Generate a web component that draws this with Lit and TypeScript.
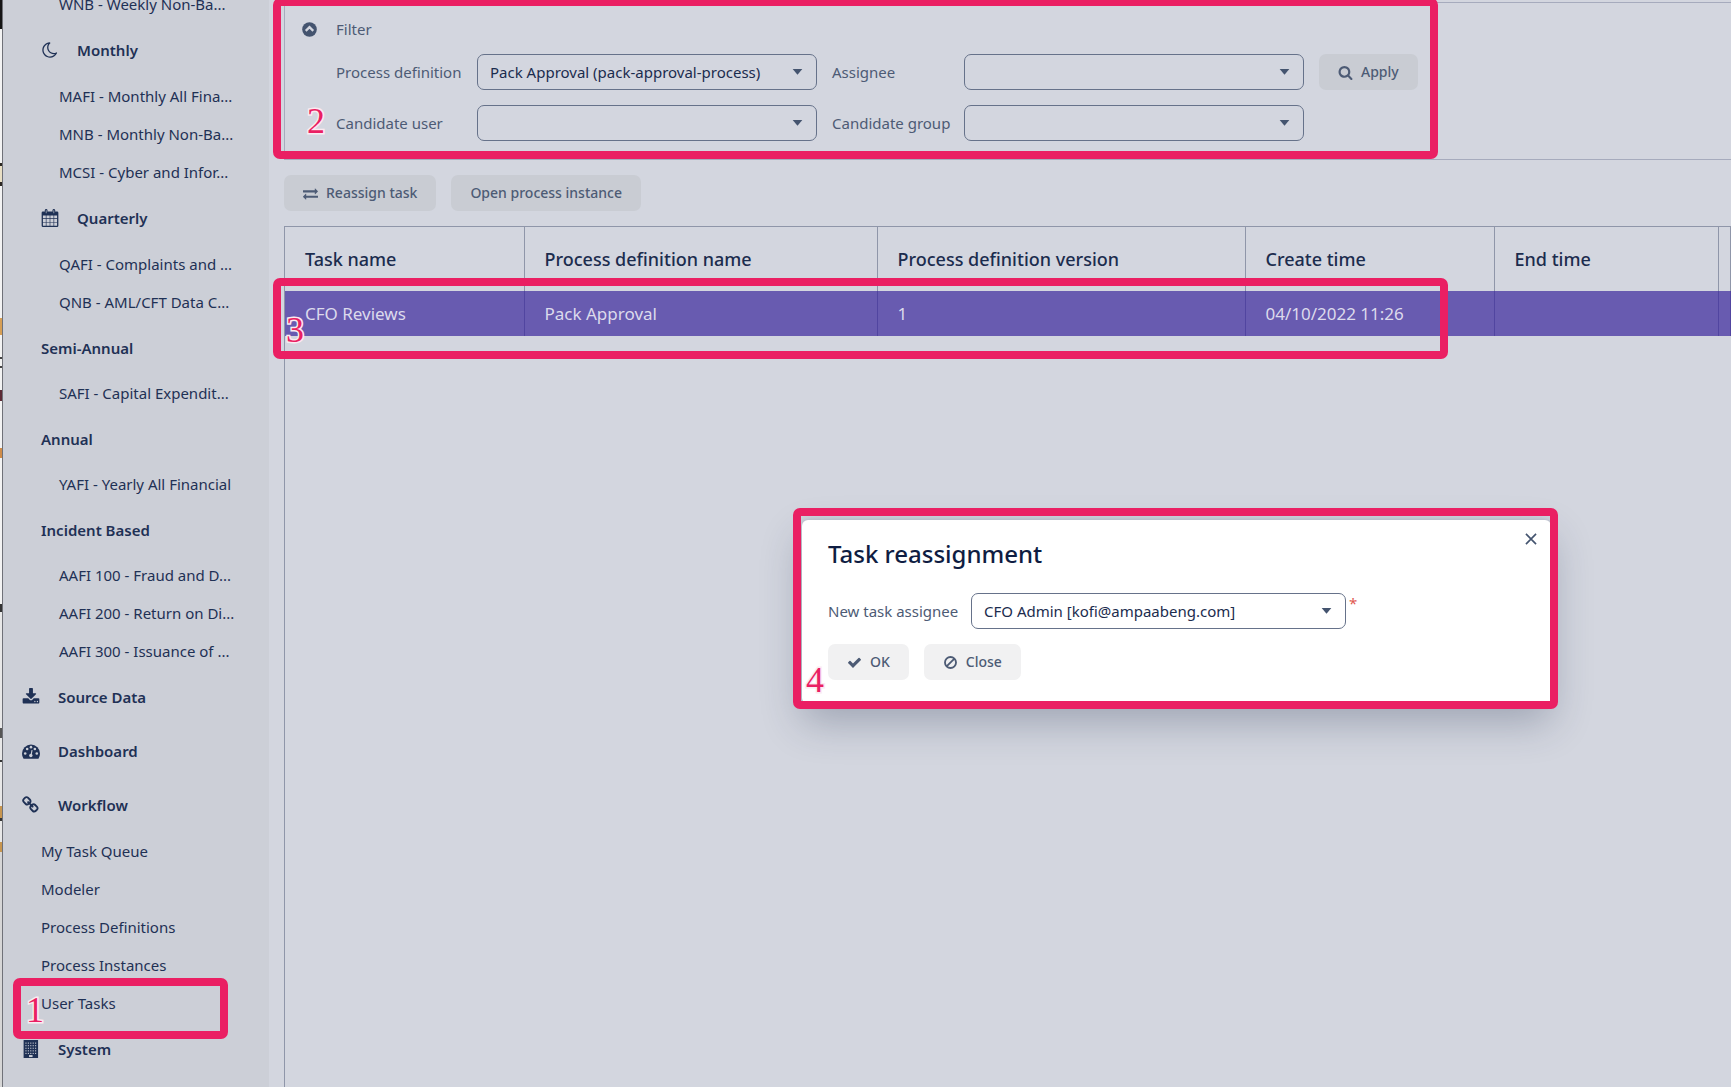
import { LitElement, html, css, svg, nothing } from "lit";
import { customElement, property } from "lit/decorators.js";

const ICONS: Record<string, unknown> = {
  moon: svg`<path d="M1390 1303q-54 9-110 9-182 0-337-90t-245-245-90-337q0-192 104-357-201 60-328.5 229t-127.5 384q0 130 51 248.5t136.5 204 204 136.5 248.5 51q144 0 273.5-61.5t220.5-171.5zm203-85q-94 203-283.5 324.5t-413.5 121.5q-156 0-298-61t-245-164-164-245-61-298q0-153 57.5-292.5t156-241.5 235.5-164.5 290-68.5q44-2 61 39 18 41-15 72-86 78-131.5 181.5t-45.5 218.5q0 148 73 273t198 198 273 73q118 0 228-51 41-18 72 13 14 14 17.5 34t-4.5 38z"/>`,
  calendar: svg`<path fill-rule="evenodd" d="M190 256H1602Q1728 256 1728 384V1664Q1728 1792 1602 1792H190Q64 1792 64 1664V384Q64 256 190 256ZM192 640V928H480V640ZM544 640V928H864V640ZM928 640V928H1248V640ZM1312 640V928H1600V640ZM192 992V1312H480V992ZM544 992V1312H864V992ZM928 992V1312H1248V992ZM1312 992V1312H1600V992ZM192 1376V1664H480V1376ZM544 1376V1664H864V1376ZM928 1376V1664H1248V1376ZM1312 1376V1664H1600V1376Z"/><rect x="384" y="0" width="256" height="512" rx="120"/><rect x="1152" y="0" width="256" height="512" rx="120"/><path class="cut" d="M480 128h64v288h-64zM1248 128h64v288h-64z"/>`,
  download: svg`<path d="M1344 1344q0-26-19-45t-45-19-45 19-19 45 19 45 45 19 45-19 19-45zm256 0q0-26-19-45t-45-19-45 19-19 45 19 45 45 19 45-19 19-45zm128-224v320q0 40-28 68t-68 28h-1472q-40 0-68-28t-28-68v-320q0-40 28-68t68-28h465l135 136q58 56 136 56t136-56l136-136h464q40 0 68 28t28 68zm-325-569q17 41-14 70l-448 448q-18 19-45 19t-45-19l-448-448q-31-29-14-70 17-39 59-39h256v-448q0-26 19-45t45-19h256q26 0 45 19t19 45v448h256q42 0 59 39z"/>`,
  gauge: svg`<path d="M0 1152A896 896 0 0 1 1792 1152Q1792 1413 1651 1635Q1632 1664 1597 1664H195Q160 1664 141 1635Q0 1413 0 1152Z"/><g class="cut"><circle cx="320" cy="1152" r="128"/><circle cx="512" cy="704" r="128"/><circle cx="896" cy="512" r="128"/><circle cx="1280" cy="704" r="128"/><circle cx="1472" cy="1152" r="128"/><circle cx="880" cy="1344" r="170"/><path d="M850 1300L950 800Q1010 760 1050 820L960 1320Z"/></g>`,
  link: svg`<path d="M1456 1216q0-40-28-68l-208-208q-28-28-68-28-42 0-72 32 3 3 19 18.5t21.5 21.5 15 19 13 25.5 3.5 27.5q0 40-28 68t-68 28q-15 0-27.5-3.5t-25.5-13-19-15-21.5-21.5-18.5-19q-33 31-33 73 0 40 28 68l206 207q27 27 68 27 40 0 68-26l147-146q28-28 28-67zm-703-705q0-40-28-68l-206-207q-28-28-68-28-39 0-68 27l-147 146q-28 28-28 67 0 40 28 68l208 208q27 27 68 27 42 0 72-31-3-3-19-18.5t-21.5-21.5-15-19-13-25.5-3.5-27.5q0-40 28-68t68-28q15 0 27.5 3.5t25.5 13 19 15 21.5 21.5 18.5 19q33-31 33-73zm895 705q0 120-85 203l-147 146q-83 83-203 83-121 0-204-85l-206-207q-83-83-83-203 0-123 88-209l-88-88q-86 88-208 88-120 0-204-84l-208-208q-84-84-84-204t85-203l147-146q83-83 203-83 121 0 204 85l206 207q83 83 83 203 0 123-88 209l88 88q86-88 208-88 120 0 204 84l208 208q84 84 84 204z"/>`,
  building: svg`<path d="M160 0H1600V1792H160Z"/><g class="cut">${[256, 512, 768, 1024, 1280].map((y) =>
    [340, 580, 820, 1060, 1300].map((x) => svg`<rect x=${x} y=${y} width="110" height="110"/>`)
  )}<path d="M700 1500h350v200h-350z"/></g>`,
  up: svg`<circle cx="896" cy="896" r="768"/><path class="cutline" d="M500 1040L896 650L1292 1040"/>`,
  search: svg`<path d="M1216 832q0-185-131.5-316.5t-316.5-131.5-316.5 131.5-131.5 316.5 131.5 316.5 316.5 131.5 316.5-131.5 131.5-316.5zm512 832q0 52-38 90t-90 38q-54 0-90-38l-343-342q-179 124-399 124-143 0-273.5-55.5t-225-150-150-225-55.5-273.5 55.5-273.5 150-225 225-150 273.5-55.5 273.5 55.5 225 150 150 225 55.5 273.5q0 220-124 399l343 343q37 37 37 90z"/>`,
  exchange: svg`<path d="M1792 1184v192q0 13-9.5 22.5t-22.5 9.5h-1376v192q0 13-9.5 22.5t-22.5 9.5q-12 0-24-10l-319-320q-9-9-9-22 0-14 9-23l320-320q9-9 23-9 13 0 22.5 9.5t9.5 22.5v192h1376q13 0 22.5 9.5t9.5 22.5zm0-544q0 14-9 23l-320 320q-9 9-23 9-13 0-22.5-9.5t-9.5-22.5v-192h-1376q-13 0-22.5-9.5t-9.5-22.5v-192q0-13 9.5-22.5t22.5-9.5h1376v-192q0-14 9-23t23-9q12 0 24 10l319 319q9 9 9 23z"/>`,
  check: svg`<path d="M1671 566q0 40-28 68l-724 724-136 136q-28 28-68 28t-68-28l-136-136-362-362q-28-28-28-68t28-68l136-136q28-28 68-28t68 28l294 295 656-657q28-28 68-28t68 28l136 136q28 28 28 68z"/>`,
  ban: svg`<circle class="line" cx="896" cy="896" r="660"/><path class="line" d="M430 1362L1362 430"/>`,
  close: svg`<path class="thin" d="M250 250L1542 1542M1542 250L250 1542"/>`,
  caret: svg`<path d="M230 560H1562L896 1330Z"/>`,
};

@customElement("app-icon")
class AppIcon extends LitElement {
  @property() name = "";
  static styles = css`
    :host { display: inline-flex; width: 16px; height: 16px; flex: none; }
    svg { width: 100%; height: 100%; fill: currentColor; overflow: visible; }
    .cut { fill: var(--icon-cut, #cccfd7); }
    .cutline { fill: none; stroke: var(--icon-cut, #d3d6df); stroke-width: 240; }
    .line { fill: none; stroke: currentColor; stroke-width: 220; }
    .thin { fill: none; stroke: currentColor; stroke-width: 210; }
  `;
  render() {
    return html`<svg viewBox="0 0 1792 1792" aria-hidden="true">${ICONS[this.name]}</svg>`;
  }
}

interface NavItem {
  text: string;
  kind: "leaf" | "sub" | "top" | "child";
  icon?: string;
}

const NAV: NavItem[] = [
  { kind: "leaf", text: "WNB - Weekly Non-Ba..." },
  { kind: "sub", text: "Monthly", icon: "moon" },
  { kind: "leaf", text: "MAFI - Monthly All Fina..." },
  { kind: "leaf", text: "MNB - Monthly Non-Ba..." },
  { kind: "leaf", text: "MCSI - Cyber and Infor..." },
  { kind: "sub", text: "Quarterly", icon: "calendar" },
  { kind: "leaf", text: "QAFI - Complaints and ..." },
  { kind: "leaf", text: "QNB - AML/CFT Data C..." },
  { kind: "sub", text: "Semi-Annual" },
  { kind: "leaf", text: "SAFI - Capital Expendit..." },
  { kind: "sub", text: "Annual" },
  { kind: "leaf", text: "YAFI - Yearly All Financial" },
  { kind: "sub", text: "Incident Based" },
  { kind: "leaf", text: "AAFI 100 - Fraud and D..." },
  { kind: "leaf", text: "AAFI 200 - Return on Di..." },
  { kind: "leaf", text: "AAFI 300 - Issuance of ..." },
  { kind: "top", text: "Source Data", icon: "download" },
  { kind: "top", text: "Dashboard", icon: "gauge" },
  { kind: "top", text: "Workflow", icon: "link" },
  { kind: "child", text: "My Task Queue" },
  { kind: "child", text: "Modeler" },
  { kind: "child", text: "Process Definitions" },
  { kind: "child", text: "Process Instances" },
  { kind: "child", text: "User Tasks" },
  { kind: "top", text: "System", icon: "building" },
];

@customElement("app-root")
class AppRoot extends LitElement {
  static styles = css`
    :host {
      display: block;
      font-family: "Noto Sans", "Open Sans", sans-serif;
      font-size: 15px;
      line-height: 20px;
      color: #4d5b75;
    }
    * { box-sizing: border-box; }
    .page {
      position: relative;
      display: flex;
      height: 100vh;
      overflow: hidden;
      background: #d3d6df;
    }
    .edge {
      flex: none;
      width: 3px;
      border-right: 1px solid #6f7178;
      background: linear-gradient(
        #151515 29px, #f3f3f3 29px 163px, #2b2722 163px 166px, #e9dfc4 166px 182px, #2b2722 182px 186px,
        #f3f3f3 186px 318px, #d79f55 318px 335px, #f3f3f3 335px 357px, #444 357px 359px, #f3f3f3 359px 366px,
        #444 366px 368px, #f3f3f3 368px 390px, #5b2a35 390px 401px, #f3f3f3 401px 448px, #d08c48 448px 458px,
        #f3f3f3 458px 604px, #333 604px 612px, #e8e8e8 612px 728px, #555 728px 738px, #e8e8e8 738px 760px,
        #333 760px 762px, #e8e8e8 762px 806px, #c8964f 806px 818px, #333 818px 821px, #e8e8e8 821px 842px,
        #c8964f 842px 852px, #d6d6d6 852px
      );
    }
    .sidebar { flex: none; width: 266px; background: #cccfd7; }
    .nav { list-style: none; margin: -15px 0 0; padding: 0; color: #1f3155; }
    .link {
      display: flex;
      align-items: center;
      height: 38px;
      color: inherit;
      text-decoration: none;
      white-space: nowrap;
    }
    .leaf { padding-left: 56px; }
    .child { padding-left: 38px; }
    .sub { padding-left: 38px; height: 53px; gap: 18px; font-weight: 600; }
    .sub.with-icon { height: 54px; }
    .top { padding-left: 19px; height: 54px; gap: 18px; font-weight: 600; }
    .nav app-icon { width: 18px; height: 18px; }
    .main {
      flex: 1;
      min-width: 0;
      display: flex;
      flex-direction: column;
      gap: 15px;
      padding: 2px 0 0 15px;
    }
    .filter {
      border: 1px solid #a6abbd;
      border-right: 0;
      height: 158px;
      padding: 16px 0 0 16px;
    }
    .filter-head { display: flex; align-items: center; gap: 18px; height: 20px; }
    .toggle {
      display: flex;
      padding: 0;
      border: 0;
      background: none;
      color: #44546f;
    }
    .toggle app-icon { --icon-cut: #d3d6df; width: 17px; height: 17px; }
    .filter-grid {
      display: grid;
      grid-template-columns: 126px 340px 117px 340px auto;
      justify-content: start;
      align-items: center;
      gap: 15px;
      padding: 15px 0 0 35px;
      white-space: nowrap;
    }
    .select-wrap { position: relative; display: block; color: #44546f; }
    .select-wrap app-icon {
      position: absolute;
      right: 13px;
      top: 11px;
      width: 13px;
      height: 13px;
      pointer-events: none;
    }
    .select {
      appearance: none;
      display: block;
      width: 100%;
      height: 36px;
      margin: 0;
      padding: 0 30px 0 12px;
      border: 1px solid #66728a;
      border-radius: 7px;
      background: transparent;
      color: #1b2c4e;
      font: inherit;
    }
    .button {
      display: inline-flex;
      align-items: center;
      justify-content: center;
      gap: 8px;
      height: 36px;
      padding: 0 19px;
      border: 0;
      border-radius: 7px;
      background: #c9ccd3;
      color: #4d5b75;
      font: inherit;
      font-size: 14px;
      font-weight: 500;
      white-space: nowrap;
    }
    .button app-icon { width: 15px; height: 15px; }
    .toolbar { display: flex; gap: 15px; }
    .grid-box { flex: 1; border: 1px solid #8f96a9; border-width: 1px 0 0 1px; }
    .table { width: 100%; table-layout: fixed; border-collapse: collapse; font-size: 18px; line-height: 24px; }
    .c1 { width: 239px; }
    .c2 { width: 353px; }
    .c3 { width: 368px; }
    .c4 { width: 249px; }
    .c5 { width: 224px; }
    .table th {
      height: 64px;
      padding: 0 20px;
      border-right: 1px solid #8f96a9;
      color: #1b2c4e;
      font-weight: 500;
      text-align: left;
    }
    .table td {
      height: 45px;
      padding: 0 20px;
      border-right: 1px solid #5145a0;
      background: #685bb0;
      color: #dcdaec;
      font-size: 17px;
    }
    .dialog {
      position: absolute;
      left: 802px;
      top: 520px;
      width: 749px;
      padding: 19px 26px 24px;
      border-radius: 6px;
      background: #fff;
      box-shadow: 0 18px 40px rgba(35, 50, 80, 0.3), 0 0 6px rgba(35, 50, 80, 0.2);
    }
    .dialog-title { margin: 0 0 24px; color: #0f1d42; font-size: 24px; font-weight: 500; line-height: 30px; }
    .dialog-close {
      position: absolute;
      right: 11px;
      top: 10px;
      display: flex;
      padding: 2px;
      border: 0;
      background: none;
      color: #44546f;
    }
    .dialog-close app-icon { width: 14px; height: 14px; }
    .dialog-row {
      display: grid;
      grid-template-columns: 128px 375px auto;
      gap: 15px;
      align-items: center;
      white-space: nowrap;
    }
    .required { align-self: start; margin-left: -12px; color: #e0584f; }
    .dialog-actions { display: flex; gap: 15px; padding-top: 15px; }
    .dialog .button { background: #f1f1f2; }
    .mark {
      position: absolute;
      border: 8px solid #ea1f63;
      border-radius: 7px;
      pointer-events: none;
    }
    .m1 { left: 13px; top: 978px; width: 215px; height: 61px; }
    .m2 { left: 273px; top: -2px; width: 1165px; height: 161px; }
    .m3 { left: 273px; top: 278px; width: 1175px; height: 81px; }
    .m4 { left: 793px; top: 508px; width: 765px; height: 201px; }
    .num {
      position: absolute;
      left: 5px;
      bottom: 3px;
      color: #ea1f63;
      font-family: "Liberation Serif", serif;
      font-size: 36px;
      line-height: 36px;
      -webkit-text-stroke: 3px #fbeaf1;
      paint-order: stroke fill;
    }
    .m2 .num { left: 26px; bottom: 12px; }
  `;

  private select(id: string, value = "") {
    return html`<span class="select-wrap">
      <select class="select" id=${id}><option>${value}</option></select>
      <app-icon name="caret"></app-icon>
    </span>`;
  }

  render() {
    return html`
      <div class="page">
        <div class="edge"></div>
        <nav class="sidebar" aria-label="Main">
          <ul class="nav">
            ${NAV.map(
              (n) => html`<li>
                <a href="#" class="link ${n.kind} ${n.icon ? "with-icon" : ""}"
                  >${n.icon ? html`<app-icon name=${n.icon}></app-icon>` : nothing}<span>${n.text}</span></a>
              </li>`
            )}
          </ul>
        </nav>
        <main class="main">
          <section class="filter">
            <div class="filter-head">
              <button class="toggle" aria-label="Collapse filter"><app-icon name="up"></app-icon></button>
              <span>Filter</span>
            </div>
            <div class="filter-grid">
              <label for="definition">Process definition</label>
              ${this.select("definition", "Pack Approval (pack-approval-process)")}
              <label for="assignee">Assignee</label>
              ${this.select("assignee")}
              <button class="button"><app-icon name="search"></app-icon>Apply</button>
              <label for="user">Candidate user</label>
              ${this.select("user")}
              <label for="group">Candidate group</label>
              ${this.select("group")}
            </div>
          </section>
          <div class="toolbar">
            <button class="button"><app-icon name="exchange"></app-icon>Reassign task</button>
            <button class="button">Open process instance</button>
          </div>
          <div class="grid-box">
            <table class="table">
              <colgroup>
                <col class="c1" /><col class="c2" /><col class="c3" /><col class="c4" /><col class="c5" /><col />
              </colgroup>
              <thead>
                <tr>
                  <th>Task name</th>
                  <th>Process definition name</th>
                  <th>Process definition version</th>
                  <th>Create time</th>
                  <th>End time</th>
                  <th></th>
                </tr>
              </thead>
              <tbody>
                <tr>
                  <td>CFO Reviews</td>
                  <td>Pack Approval</td>
                  <td>1</td>
                  <td>04/10/2022 11:26</td>
                  <td></td>
                  <td></td>
                </tr>
              </tbody>
            </table>
          </div>
        </main>
        <div class="dialog" role="dialog" aria-labelledby="dialog-title">
          <h2 class="dialog-title" id="dialog-title">Task reassignment</h2>
          <button class="dialog-close" aria-label="Close dialog"><app-icon name="close"></app-icon></button>
          <div class="dialog-row">
            <label for="new-assignee">New task assignee</label>
            ${this.select("new-assignee", "CFO Admin [kofi@ampaabeng.com]")}
            <span class="required">*</span>
          </div>
          <div class="dialog-actions">
            <button class="button"><app-icon name="check"></app-icon>OK</button>
            <button class="button"><app-icon name="ban"></app-icon>Close</button>
          </div>
        </div>
        <div class="mark m1"><span class="num">1</span></div>
        <div class="mark m2"><span class="num">2</span></div>
        <div class="mark m3"><span class="num">3</span></div>
        <div class="mark m4"><span class="num">4</span></div>
      </div>
    `;
  }
}
